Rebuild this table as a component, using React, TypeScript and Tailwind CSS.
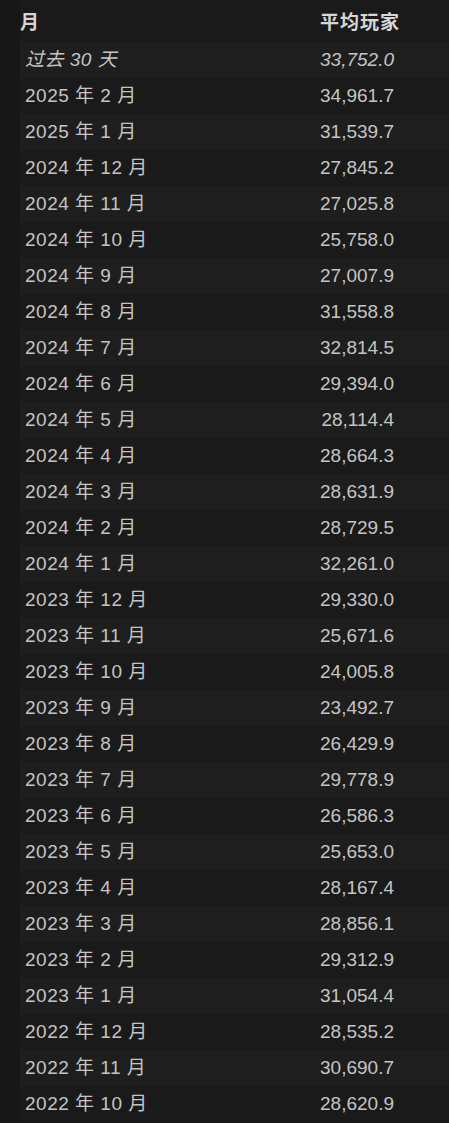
const rows: [string, string][] = [
  ['2025 年 2 月', '34,961.7'],
  ['2025 年 1 月', '31,539.7'],
  ['2024 年 12 月', '27,845.2'],
  ['2024 年 11 月', '27,025.8'],
  ['2024 年 10 月', '25,758.0'],
  ['2024 年 9 月', '27,007.9'],
  ['2024 年 8 月', '31,558.8'],
  ['2024 年 7 月', '32,814.5'],
  ['2024 年 6 月', '29,394.0'],
  ['2024 年 5 月', '28,114.4'],
  ['2024 年 4 月', '28,664.3'],
  ['2024 年 3 月', '28,631.9'],
  ['2024 年 2 月', '28,729.5'],
  ['2024 年 1 月', '32,261.0'],
  ['2023 年 12 月', '29,330.0'],
  ['2023 年 11 月', '25,671.6'],
  ['2023 年 10 月', '24,005.8'],
  ['2023 年 9 月', '23,492.7'],
  ['2023 年 8 月', '26,429.9'],
  ['2023 年 7 月', '29,778.9'],
  ['2023 年 6 月', '26,586.3'],
  ['2023 年 5 月', '25,653.0'],
  ['2023 年 4 月', '28,167.4'],
  ['2023 年 3 月', '28,856.1'],
  ['2023 年 2 月', '29,312.9'],
  ['2023 年 1 月', '31,054.4'],
  ['2022 年 12 月', '28,535.2'],
  ['2022 年 11 月', '30,690.7'],
  ['2022 年 10 月', '28,620.9'],
];

export default function App() {
  return (
    <div className="min-h-screen bg-[#171717] pl-[20px] font-['Liberation_Sans','Noto_Sans_CJK_SC',sans-serif] text-[19px] text-[#c4c4c4]">
      <div className="flex h-[42px] items-center justify-between bg-[#1a1a1a] pt-[4px] pr-[49px] text-[19px] font-bold text-[#d6d6d6]">
        <span>月</span>
        <span className="tracking-[1px]">平均玩家</span>
      </div>
      <div className="flex h-[36px] items-center justify-between bg-[#1e1e1e] pl-[5px] pr-[55px] italic">
        <span className="tracking-[0.5px]">过去 30 天</span>
        <span>33,752.0</span>
      </div>
      {rows.map(([month, avg], i) => (
        <div
          key={month}
          className={`flex h-[36px] items-center justify-between pl-[5px] pr-[55px] ${i % 2 === 0 ? 'bg-[#1a1a1a]' : 'bg-[#1e1e1e]'}`}
        >
          <span className="tracking-[0.5px]">{month}</span>
          <span>{avg}</span>
        </div>
      ))}
    </div>
  );
}
